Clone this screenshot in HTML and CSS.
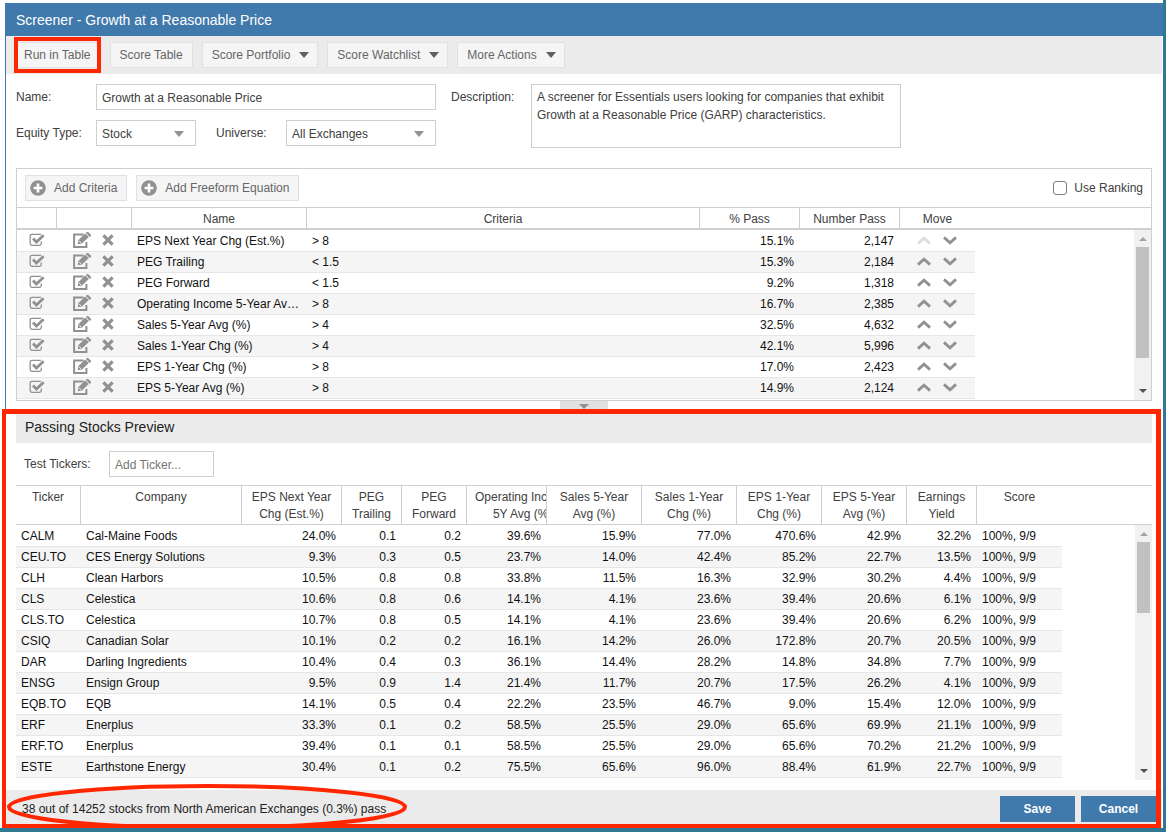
FILE: index.html
```html
<!DOCTYPE html>
<html lang="en">
<head>
  <meta charset="UTF-8" />
  <meta name="viewport" content="width=device-width, initial-scale=1.0"/>
  <title>Screener - Growth at a Reasonable Price</title>
  <link rel="stylesheet" href="styles.css">
</head>
<body>
  <svg class="sprite" aria-hidden="true">
    <symbol id="icon-plus" viewBox="0 0 16 16">
      <circle cx="8" cy="8" r="7.8" fill="currentColor"/>
      <path d="M8 3.6v8.8M3.6 8h8.8" stroke="#fff" stroke-width="2.6"/>
    </symbol>
    <symbol id="icon-edit" viewBox="0 0 18 16">
      <path d="M10.5 2.6H1.1v12.3h12.3V10" fill="none" stroke="currentColor" stroke-width="2"/>
      <path d="M4.8 12.2l.6-4.2 6.8-6.6 3.6 3.6L9 11.6z" fill="currentColor"/>
      <path d="M12.9.9l.9-.9h1.4L18 2.8v1.3l-1.2 1z" fill="currentColor"/>
      <path d="M6.2 9l1.9 1.9" stroke="#fff" stroke-width="1"/>
    </symbol>
    <symbol id="icon-remove" viewBox="0 0 12 12">
      <path d="M1.4 1.4l9.2 9.2M10.6 1.4l-9.2 9.2" stroke="currentColor" stroke-width="3.2"/>
    </symbol>
    <symbol id="icon-up" viewBox="0 0 14 9">
      <path d="M1 7.6l6-5.4 6 5.4" fill="none" stroke="currentColor" stroke-width="2.8"/>
    </symbol>
    <symbol id="icon-down" viewBox="0 0 14 9">
      <path d="M1 1.4l6 5.4 6-5.4" fill="none" stroke="currentColor" stroke-width="2.8"/>
    </symbol>
  </svg>

  <div class="window">
    <h1>Screener - Growth at a Reasonable Price</h1>

    <div class="toolbar">
      <button class="btn marked">Run in Table</button>
      <button class="btn">Score Table</button>
      <button class="btn menu">Score Portfolio</button>
      <button class="btn menu">Score Watchlist</button>
      <button class="btn menu">More Actions</button>
    </div>

    <form class="details">
      <div class="fields">
        <div class="row">
          <label class="label-main" for="name">Name:</label>
          <input class="grow" type="text" id="name" value="Growth at a Reasonable Price">
        </div>
        <div class="row">
          <label class="label-main" for="equity-type">Equity Type:</label>
          <span class="select type">
            <select id="equity-type"><option>Stock</option></select>
          </span>
          <label class="label-universe" for="universe">Universe:</label>
          <span class="select grow">
            <select id="universe"><option>All Exchanges</option></select>
          </span>
        </div>
      </div>
      <label class="label-main" for="description">Description:</label>
      <textarea id="description">A screener for Essentials users looking for companies that exhibit Growth at a Reasonable Price (GARP) characteristics.</textarea>
    </form>

    <section class="criteria">
      <div class="criteria-bar">
        <button class="btn add"><svg><use href="#icon-plus"/></svg>Add Criteria</button>
        <button class="btn add"><svg><use href="#icon-plus"/></svg>Add Freeform Equation</button>
        <label class="ranking"><input type="checkbox" class="box"> Use Ranking</label>
      </div>
      <div class="grid">
        <table class="criteria-table">
          <colgroup>
            <col class="w40"><col class="w75"><col class="w175"><col class="w393"><col class="w100"><col class="w100"><col class="w75"><col>
          </colgroup>
          <thead>
            <tr>
              <th></th><th></th><th>Name</th><th>Criteria</th><th>% Pass</th><th>Number Pass</th><th>Move</th><th></th>
            </tr>
          </thead>
          <tbody id="criteria-body"></tbody>
        </table>
        <div class="scrollbar criteria-scroll"><div class="thumb"></div></div>
      </div>
    </section>
    <button class="splitter" aria-label="Collapse"></button>

    <div class="lower">
      <section class="preview">
        <h2>Passing Stocks Preview</h2>
        <div class="test-row">
          <label for="ticker">Test Tickers:</label>
          <input type="text" id="ticker" placeholder="Add Ticker...">
        </div>
        <div class="grid">
          <table class="stocks-table">
            <colgroup>
              <col class="w65"><col class="w161"><col class="w100"><col class="w60"><col class="w65"><col class="w80"><col class="w95"><col class="w95"><col class="w85"><col class="w85"><col class="w70"><col class="w85"><col>
            </colgroup>
            <thead>
              <tr>
                <th><span>Ticker</span></th>
                <th><span>Company</span></th>
                <th><span>EPS Next Year<br>Chg (Est.%)</span></th>
                <th><span>PEG<br>Trailing</span></th>
                <th><span>PEG<br>Forward</span></th>
                <th><span>Operating Income<br>5Y Avg (%)</span></th>
                <th><span>Sales 5-Year<br>Avg (%)</span></th>
                <th><span>Sales 1-Year<br>Chg (%)</span></th>
                <th><span>EPS 1-Year<br>Chg (%)</span></th>
                <th><span>EPS 5-Year<br>Avg (%)</span></th>
                <th><span>Earnings<br>Yield</span></th>
                <th><span>Score</span></th>
                <th></th>
              </tr>
            </thead>
            <tbody id="stocks-body"></tbody>
          </table>
          <div class="scrollbar stocks-scroll"><div class="thumb"></div></div>
        </div>
      </section>

      <footer>
        <p>38 out of 14252 stocks from North American Exchanges (0.3%) pass</p>
        <button class="primary">Save</button>
        <button class="primary">Cancel</button>
        <svg class="ring" viewBox="0 0 402 48" aria-hidden="true">
          <ellipse cx="201" cy="24" rx="198" ry="21"/>
        </svg>
      </footer>
      <div class="frame"></div>
    </div>
  </div>

  <script>
    const criteria = [
      ['EPS Next Year Chg (Est.%)', '> 8', '15.1%', '2,147'],
      ['PEG Trailing', '< 1.5', '15.3%', '2,184'],
      ['PEG Forward', '< 1.5', '9.2%', '1,318'],
      ['Operating Income 5-Year Avg (%)', '> 8', '16.7%', '2,385'],
      ['Sales 5-Year Avg (%)', '> 4', '32.5%', '4,632'],
      ['Sales 1-Year Chg (%)', '> 4', '42.1%', '5,996'],
      ['EPS 1-Year Chg (%)', '> 8', '17.0%', '2,423'],
      ['EPS 5-Year Avg (%)', '> 8', '14.9%', '2,124']
    ];

    const stocks = [
      ['CALM', 'Cal-Maine Foods', '24.0%', '0.1', '0.2', '39.6%', '15.9%', '77.0%', '470.6%', '42.9%', '32.2%'],
      ['CEU.TO', 'CES Energy Solutions', '9.3%', '0.3', '0.5', '23.7%', '14.0%', '42.4%', '85.2%', '22.7%', '13.5%'],
      ['CLH', 'Clean Harbors', '10.5%', '0.8', '0.8', '33.8%', '11.5%', '16.3%', '32.9%', '30.2%', '4.4%'],
      ['CLS', 'Celestica', '10.6%', '0.8', '0.6', '14.1%', '4.1%', '23.6%', '39.4%', '20.6%', '6.1%'],
      ['CLS.TO', 'Celestica', '10.7%', '0.8', '0.5', '14.1%', '4.1%', '23.6%', '39.4%', '20.6%', '6.2%'],
      ['CSIQ', 'Canadian Solar', '10.1%', '0.2', '0.2', '16.1%', '14.2%', '26.0%', '172.8%', '20.7%', '20.5%'],
      ['DAR', 'Darling Ingredients', '10.4%', '0.4', '0.3', '36.1%', '14.4%', '28.2%', '14.8%', '34.8%', '7.7%'],
      ['ENSG', 'Ensign Group', '9.5%', '0.9', '1.4', '21.4%', '11.7%', '20.7%', '17.5%', '26.2%', '4.1%'],
      ['EQB.TO', 'EQB', '14.1%', '0.5', '0.4', '22.2%', '23.5%', '46.7%', '9.0%', '15.4%', '12.0%'],
      ['ERF', 'Enerplus', '33.3%', '0.1', '0.2', '58.5%', '25.5%', '29.0%', '65.6%', '69.9%', '21.1%'],
      ['ERF.TO', 'Enerplus', '39.4%', '0.1', '0.1', '58.5%', '25.5%', '29.0%', '65.6%', '70.2%', '21.2%'],
      ['ESTE', 'Earthstone Energy', '30.4%', '0.1', '0.2', '75.5%', '65.6%', '96.0%', '88.4%', '61.9%', '22.7%']
    ];

    function iconButton(name, label, disabled) {
      return `<button class="icon ${name}" aria-label="${label}"${disabled ? ' disabled' : ''}><svg><use href="#icon-${name}"/></svg></button>`;
    }

    document.getElementById('criteria-body').innerHTML = criteria.map(([name, rule, pct, num], i) => `
      <tr>
        <td class="center"><input type="checkbox" class="tick" aria-label="Use ${name}" checked></td>
        <td class="center">${iconButton('edit', 'Edit')}${iconButton('remove', 'Remove')}</td>
        <td>${name}</td>
        <td>${rule.replace('<', '&lt;').replace('>', '&gt;')}</td>
        <td class="num">${pct}</td>
        <td class="num">${num}</td>
        <td class="center">${iconButton('up', 'Move up', i === 0)}${iconButton('down', 'Move down')}</td>
        <td></td>
      </tr>`).join('');

    document.getElementById('stocks-body').innerHTML = stocks.map(row => `
      <tr>
        ${row.map((v, i) => `<td${i > 1 ? ' class="num"' : ''}>${v}</td>`).join('')}
        <td>100%, 9/9</td>
        <td></td>
      </tr>`).join('');
  </script>
</body>
</html>
```

FILE: styles.css
```css
* {
  box-sizing: border-box;
}
body {
  font-family: "Liberation Sans", Arial, sans-serif;
  font-size: 12px;
  margin: 0;
  padding: 3px 0 0 5px;
  min-height: 100vh;
  display: flex;
  flex-direction: column;
  background: #fff;
  color: #404040;
  border-right: 3px solid #2f7893;
  border-bottom: 4px solid #2f7893;
  overflow: hidden;
}
button, input, select, textarea {
  font: inherit;
  color: inherit;
  margin: 0;
}
button {
  cursor: pointer;
}
.sprite {
  position: absolute;
  width: 0; height: 0;
}
.window {
  flex: 1;
  display: flex;
  flex-direction: column;
  border-left: 1px solid #4079ac;
  border-right: 1px solid #fff;
}
h1 {
  margin: 0 -1px;
  padding: 1px 11px 0;
  line-height: 32px;
  font-size: 14px;
  font-weight: normal;
  background: #4079ac;
  color: #fff;
}

/* Toolbar */
.toolbar {
  display: flex;
  gap: 9px;
  padding: 6px 8px;
  background: #ebebeb;
}
.btn {
  height: 26px;
  padding: 0 9px;
  border: 1px solid #e1e1e1;
  background: #f5f5f5;
  color: #666;
  white-space: nowrap;
  display: flex;
  align-items: center;
}
.menu {
  padding-right: 8px;
}
.menu::after {
  content: "";
  margin-left: 9px;
  border: 5px solid transparent;
  border-top: 6px solid #606060;
  border-bottom: 0;
}
.marked {
  position: relative;
}
.marked::after {
  content: "";
  position: absolute;
  inset: -6px -1px -6px -1px;
  border: 4px solid #ff2600;
}

/* Screener details */
.details {
  display: flex;
  align-items: flex-start;
  padding: 10px 10px 20px;
}
.fields {
  width: 420px;
  margin-right: 15px;
  display: flex;
  flex-direction: column;
  gap: 10px;
}
.row {
  display: flex;
}
.details label {
  line-height: 26px;
  flex: none;
}
.label-main {
  width: 80px;
}
.label-universe {
  width: 70px;
  margin-left: 20px;
}
.grow {
  flex: 1;
}
input[type="text"], select, textarea {
  height: 26px;
  padding: 1px 5px 0;
  border: 1px solid #cfcfcf;
  border-radius: 0;
  background: #fff;
  outline: none;
}
.select {
  position: relative;
}
.select select {
  width: 100%;
  appearance: none;
}
.select::after {
  content: "";
  position: absolute;
  right: 12px; top: 11px;
  border: 5px solid transparent;
  border-top: 6px solid #919191;
  border-bottom: 0;
  pointer-events: none;
}
.type {
  width: 100px;
}
textarea {
  flex: 0 1 370px;
  height: 64px;
  padding: 3px 5px;
  line-height: 18px;
  resize: none;
}

/* Criteria panel */
.criteria {
  margin: 0 10px;
  border: 1px solid #cfcfcf;
}
.criteria-bar {
  display: flex;
  gap: 9px;
  padding: 6px 8px;
}
.add {
  padding: 0 9px 0 4px;
}
.add svg {
  width: 16px; height: 16px;
  margin-right: 8px;
  color: #919191;
}
.ranking {
  margin-left: auto;
  display: flex;
  align-items: center;
  gap: 7px;
}
.box {
  appearance: none;
  width: 14px; height: 14px;
  border: 1px solid #808080;
  border-radius: 3px;
}

/* Grids */
.grid {
  position: relative;
}
table {
  width: 100%;
  table-layout: fixed;
  border-collapse: separate;
  border-spacing: 0;
}
th {
  font-weight: normal;
  padding: 0 8px;
  border-top: 1px solid #cfcfcf;
  border-right: 1px solid #cfcfcf;
  overflow: hidden;
  white-space: nowrap;
}
th:nth-last-child(-n+2) {
  border-right: 0;
}
td {
  height: 21px;
  padding: 0 6px 0 5px;
  border-bottom: 1px solid #e6e6e6;
  line-height: 16px;
  color: #111;
  overflow: hidden;
  text-overflow: ellipsis;
  white-space: nowrap;
}
tbody tr:first-child td {
  height: 22px;
}
tr:nth-child(even) td {
  background: #f5f5f5;
}
tbody tr td:last-child {
  background: none;
  border: 0;
}
.num {
  text-align: right;
}
td.center {
  text-align: center;
  padding: 0;
}
.w40 { width: 40px; }
.w60 { width: 60px; }
.w65 { width: 65px; }
.w70 { width: 70px; }
.w75 { width: 75px; }
.w80 { width: 80px; }
.w85 { width: 85px; }
.w95 { width: 95px; }
.w100 { width: 100px; }
.w161 { width: 161px; }
.w175 { width: 175px; }
.w393 { width: 393px; }

.criteria-table {
  padding-bottom: 1px;
}
.criteria-table th {
  height: 23px;
  padding-top: 1px;
  border-bottom: 2px solid #cfcfcf;
}
.stocks-table th {
  height: 40px;
  line-height: 17px;
  text-align: left;
  vertical-align: top;
  padding-top: 3px;
  border-bottom: 1px solid #cfcfcf;
}
.stocks-table th span {
  display: block;
  min-width: 100%;
  width: max-content;
  text-align: center;
}
.icon {
  padding: 0;
  border: 0;
  background: none;
  color: #919191;
  vertical-align: middle;
}
.icon svg {
  display: block;
  width: 100%; height: 100%;
}
.icon:disabled {
  color: #dedede;
}
td .icon, td .tick {
  margin-bottom: 2px;
}
.edit {
  width: 18px; height: 16px;
  margin-right: 11px;
}
.remove {
  width: 12px; height: 12px;
  margin-right: 3px;
}
.up, .down {
  width: 14px; height: 9px;
}
.up {
  margin-right: 12px;
}
.down {
  margin-right: 2px;
}
.tick {
  appearance: none;
  width: 16px; height: 14px;
  vertical-align: middle;
}
.tick:checked {
  background: url("data:image/svg+xml,%3Csvg xmlns='http://www.w3.org/2000/svg' viewBox='0 0 16 14' fill='none' stroke='%23919191'%3E%3Cpath d='M12 1.3H3Q1.2 1.3 1.2 3v7.5q0 1.8 1.8 1.8h7.5q1.8 0 1.8-1.8V8.5' stroke-width='1.3'/%3E%3Cpath d='M4 5.6l3.4 3.4 7.2-6.8' stroke-width='2.8'/%3E%3C/svg%3E") center / 100% 100% no-repeat;
}

/* Scrollbars */
.scrollbar {
  position: absolute;
  right: 0; bottom: 0;
  width: 17px;
  padding: 0 2px;
  background: #f1f1f1;
  display: flex;
  flex-direction: column;
}
.scrollbar::before, .scrollbar::after {
  content: "";
  align-self: center;
  border: 4px solid transparent;
}
.scrollbar::before {
  margin: 7px 0 6px;
  border-top: 0;
  border-bottom-color: #a3a3a3;
}
.scrollbar::after {
  margin: auto 0 7px;
  border-bottom: 0;
  border-top-color: #505050;
}
.thumb {
  background: #c1c1c1;
}
.criteria-scroll {
  top: 23px;
}
.criteria-scroll .thumb {
  height: 65%;
}
.stocks-scroll {
  top: 40px;
  bottom: -2px;
}
.stocks-scroll .thumb {
  height: 28%;
}

/* Preview */
.splitter {
  align-self: center;
  width: 48px; height: 8px;
  padding: 3px 19px;
  border: 0;
  background: #e1e1e1;
}
.splitter::after {
  content: "";
  display: block;
  border: 5px solid transparent;
  border-top-color: #919191;
  border-bottom: 0;
}
.lower {
  position: relative;
  flex: 1;
  display: flex;
  flex-direction: column;
}
.preview {
  flex: 1;
  margin: 0 10px;
}
h2 {
  margin: 0;
  padding: 2px 9px 0;
  line-height: 32px;
  font-size: 14px;
  font-weight: normal;
  color: #222;
  background: #ebebeb;
}
.test-row {
  display: flex;
  align-items: center;
  padding: 8px;
}
.test-row label {
  width: 85px;
}
.test-row input {
  width: 105px;
}
.test-row input::placeholder {
  color: #757575;
}
footer {
  position: relative;
  display: flex;
  align-items: center;
  gap: 6px;
  padding: 6px;
  background: #ebebeb;
  color: #222;
}
footer p {
  flex: 1;
  margin: 0 10px;
}
.primary {
  width: 75px; height: 26px;
  border: 0;
  background: #4079ac;
  color: #fff;
  font-weight: bold;
}
.ring {
  position: absolute;
  left: 0; top: -7px;
  width: 402px; height: 48px;
  fill: none;
  stroke: #ff2600;
  stroke-width: 4px;
  pointer-events: none;
}
.frame {
  position: absolute;
  inset: 0 1px -1px -4px;
  border: 5px solid #ff2600;
  border-left-width: 4px;
  pointer-events: none;
}
```
